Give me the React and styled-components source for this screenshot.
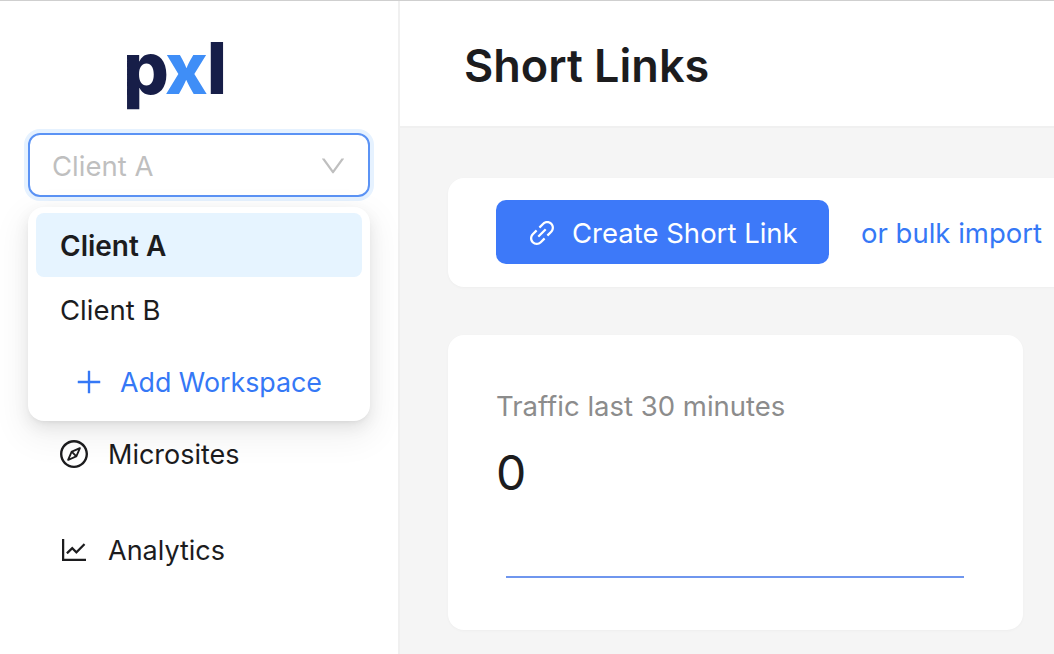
import React from 'react'
import styled, { createGlobalStyle } from 'styled-components'
import {
  AiOutlineCompass,
  AiOutlineDown,
  AiOutlineLineChart,
  AiOutlineLink,
  AiOutlinePlus,
} from 'react-icons/ai'

const GlobalStyle = createGlobalStyle`
  html, body {
    margin: 0;
    height: 100%;
    overflow: hidden;
    background: #fff;
  }
  * {
    box-sizing: border-box;
  }
  body {
    font-family: Inter, "Liberation Sans", sans-serif;
    color: #1c1c1e;
  }
`

const Page = styled.div`
  display: flex;
  width: 1054px;
  height: 654px;
  overflow: hidden;
  border-top: 1px solid #cfcfcf;
`

const Sidebar = styled.aside`
  position: relative;
  flex: 0 0 400px;
  display: flex;
  flex-direction: column;
  padding: 0 28px;
  border-right: 2px solid #f0f0f0;
  background: #fff;
`

const Logo = styled.div`
  height: 132px;
  padding: 23px 0 0 95px;
  font-size: 72px;
  line-height: 88px;
  font-weight: 800;
  letter-spacing: -4px;
  color: #171e48;
`

const LogoAccent = styled.span`
  letter-spacing: -1px;
  color: #3f8ef7;
`

const Select = styled.div`
  display: flex;
  align-items: center;
  justify-content: space-between;
  width: 342px;
  height: 64px;
  padding: 2px 20px 0 22px;
  border: 2px solid #5b93f5;
  border-radius: 12px;
  box-shadow: 0 0 0 4px #e6f2ff;
  font-size: 27.5px;
  color: #bfbfbf;
`

const Menu = styled.div`
  position: absolute;
  z-index: 2;
  top: 206px;
  left: 28px;
  width: 342px;
  height: 214px;
  padding: 6px 8px;
  border-radius: 16px;
  background: #fff;
  box-shadow:
    0 12px 32px 8px rgba(0, 0, 0, 0.05),
    0 6px 16px 0 rgba(0, 0, 0, 0.08),
    0 3px 6px -4px rgba(0, 0, 0, 0.12);
`

const Option = styled.div`
  display: flex;
  align-items: center;
  height: 64px;
  padding: 2px 0 0 24px;
  border-radius: 8px;
  font-size: ${(p) => (p.$active ? 28 : 27.5)}px;
  font-weight: ${(p) => (p.$active ? 600 : 400)};
  background: ${(p) => (p.$active ? '#e6f4ff' : 'transparent')};
`

const AddWorkspace = styled.div`
  display: flex;
  align-items: center;
  gap: 15px;
  height: 80px;
  padding: 2px 0 0 37px;
  font-size: 26.8px;
  color: #3578f6;
`

const Nav = styled.nav`
  display: flex;
  flex-direction: column;
  gap: 58px;
  padding: 238px 0 0 30px;
`

const NavItem = styled.div`
  display: flex;
  align-items: center;
  gap: 18px;
  height: 38px;
  font-size: 27px;
`

const Main = styled.main`
  flex: 1;
  min-width: 0;
  display: flex;
  flex-direction: column;
  background: #f5f5f5;
`

const Header = styled.header`
  flex: 0 0 127px;
  display: flex;
  align-items: center;
  padding: 4px 0 0 64px;
  background: #fff;
  border-bottom: 2px solid #f0f0f0;
`

const Title = styled.h1`
  margin: 0;
  font-size: 45px;
  font-weight: 600;
`

const Content = styled.div`
  display: flex;
  flex-direction: column;
  gap: 48px;
  padding: 50px 0 0 48px;
`

const Toolbar = styled.div`
  display: flex;
  align-items: flex-start;
  gap: 32px;
  width: 700px;
  height: 109px;
  padding: 22px 0 0 48px;
  border-radius: 16px;
  background: #fff;
  box-shadow: 0 1px 3px rgba(0, 0, 0, 0.03);
`

const PrimaryButton = styled.button`
  display: flex;
  align-items: center;
  gap: 14px;
  width: 333px;
  height: 64px;
  flex: none;
  padding: 2px 0 0 30px;
  border: 0;
  border-radius: 10px;
  background: #3d79f9;
  color: #fff;
  font: inherit;
  font-size: 27.5px;
`

const TextLink = styled.span`
  flex: none;
  padding-top: 1px;
  font-size: 27.5px;
  line-height: 64px;
  color: #3578f6;
`

const StatCard = styled.section`
  width: 575px;
  height: 295px;
  padding: 52px 48px 0;
  border-radius: 16px;
  background: #fff;
  box-shadow: 0 1px 3px rgba(0, 0, 0, 0.03);
`

const StatLabel = styled.div`
  font-size: 27.5px;
  line-height: 38px;
  color: #8c8c8c;
`

const StatValue = styled.div`
  margin-top: 19px;
  font-size: 48px;
  line-height: 58px;
`

const Sparkline = styled.div`
  width: 458px;
  height: 2px;
  margin: 74px 0 0 10px;
  background: #6f96ee;
`

export default function App() {
  return (
    <Page>
      <GlobalStyle />
      <Sidebar>
        <Logo>
          p<LogoAccent>x</LogoAccent>l
        </Logo>
        <Select>
          Client A
          <AiOutlineDown size={30} />
        </Select>
        <Menu>
          <Option $active>Client A</Option>
          <Option>Client B</Option>
          <AddWorkspace>
            <AiOutlinePlus size={32} />
            Add Workspace
          </AddWorkspace>
        </Menu>
        <Nav>
          <NavItem>
            <AiOutlineCompass size={32} />
            Microsites
          </NavItem>
          <NavItem>
            <AiOutlineLineChart size={32} />
            Analytics
          </NavItem>
        </Nav>
      </Sidebar>
      <Main>
        <Header>
          <Title>Short Links</Title>
        </Header>
        <Content>
          <Toolbar>
            <PrimaryButton>
              <AiOutlineLink size={32} />
              Create Short Link
            </PrimaryButton>
            <TextLink>or bulk import</TextLink>
          </Toolbar>
          <StatCard>
            <StatLabel>Traffic last 30 minutes</StatLabel>
            <StatValue>0</StatValue>
            <Sparkline />
          </StatCard>
        </Content>
      </Main>
    </Page>
  )
}
